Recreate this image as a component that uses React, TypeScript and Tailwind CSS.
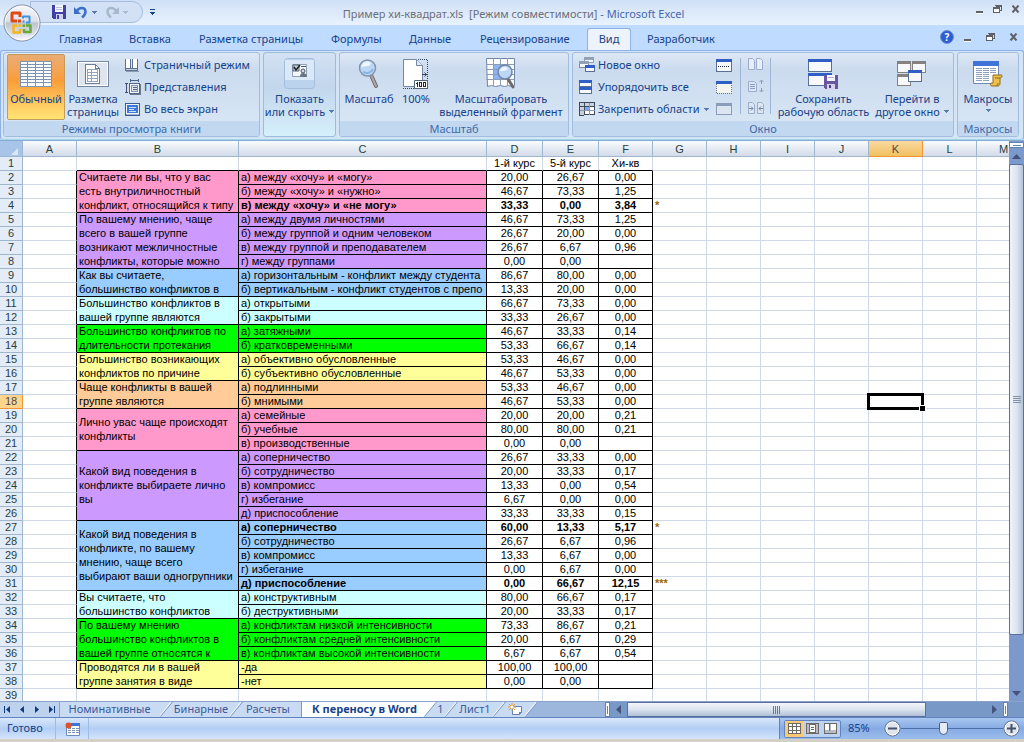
import React from "react";
import clsx from "clsx";

type Option = {
  text: string;
  d: string;
  e: string;
  f: string;
  bold?: boolean;
  mark?: string;
};

interface Question {
  fill: string;
  lines: string[];
  options: Option[];
}

const opt = (text: string, d: string, e: string, f: string): Option => ({ text, d, e, f });
const sig = (text: string, d: string, e: string, f: string, mark: string): Option => ({
  text,
  d,
  e,
  f,
  mark,
  bold: true,
});

const QUESTIONS: Question[] = [
  {
    fill: "bg-[#ff99cc]",
    lines: ["Считаете ли вы, что у вас", "есть внутриличностный", "конфликт, относящийся к типу"],
    options: [
      opt("а) между «хочу» и «могу»", "20,00", "26,67", "0,00"),
      opt("б) между «хочу» и «нужно»", "46,67", "73,33", "1,25"),
      sig("в) между «хочу» и «не могу»", "33,33", "0,00", "3,84", "*"),
    ],
  },
  {
    fill: "bg-[#cc99ff]",
    lines: ["По вашему мнению, чаще", "всего в вашей группе", "возникают межличностные", "конфликты, которые можно"],
    options: [
      opt("а) между двумя личностями", "46,67", "73,33", "1,25"),
      opt("б) между группой и одним человеком", "26,67", "20,00", "0,00"),
      opt("в) между группой и преподавателем", "26,67", "6,67", "0,96"),
      opt("г) между группами", "0,00", "0,00", ""),
    ],
  },
  {
    fill: "bg-[#99ccff]",
    lines: ["Как вы считаете,", "большинство конфликтов в"],
    options: [
      opt("а) горизонтальным - конфликт между студента", "86,67", "80,00", "0,00"),
      opt("б) вертикальным - конфликт студентов с препо", "13,33", "20,00", "0,00"),
    ],
  },
  {
    fill: "bg-[#ccffff]",
    lines: ["Большинство конфликтов в", "вашей группе являются"],
    options: [
      opt("а) открытыми", "66,67", "73,33", "0,00"),
      opt("б) закрытыми", "33,33", "26,67", "0,00"),
    ],
  },
  {
    fill: "bg-[#00ff00]",
    lines: ["Большинство конфликтов по", "длительности протекания"],
    options: [
      opt("а) затяжными", "46,67", "33,33", "0,14"),
      opt("б) кратковременными", "53,33", "66,67", "0,14"),
    ],
  },
  {
    fill: "bg-[#ffff99]",
    lines: ["Большинство возникающих", "конфликтов по причине"],
    options: [
      opt("а) объективно обусловленные", "53,33", "46,67", "0,00"),
      opt("б) субъективно обусловленные", "46,67", "53,33", "0,00"),
    ],
  },
  {
    fill: "bg-[#ffcc99]",
    lines: ["Чаще конфликты в вашей", "группе являются"],
    options: [
      opt("а) подлинными", "53,33", "46,67", "0,00"),
      opt("б) мнимыми", "46,67", "53,33", "0,00"),
    ],
  },
  {
    fill: "bg-[#ff99cc]",
    lines: ["Лично увас чаще происходят", "конфликты"],
    options: [
      opt("а) семейные", "20,00", "20,00", "0,21"),
      opt("б) учебные", "80,00", "80,00", "0,21"),
      opt("в) производственные", "0,00", "0,00", ""),
    ],
  },
  {
    fill: "bg-[#cc99ff]",
    lines: ["Какой вид поведения в", "конфликте выбираете лично", "вы"],
    options: [
      opt("а) соперничество", "26,67", "33,33", "0,00"),
      opt("б) сотрудничество", "20,00", "33,33", "0,17"),
      opt("в) компромисс", "13,33", "0,00", "0,54"),
      opt("г) избегание", "6,67", "0,00", "0,00"),
      opt("д) приспособление", "33,33", "33,33", "0,15"),
    ],
  },
  {
    fill: "bg-[#99ccff]",
    lines: ["Какой вид поведения в", "конфликте, по вашему", "мнению, чаще всего", "выбирают ваши одногрупники"],
    options: [
      sig("а) соперничество", "60,00", "13,33", "5,17", "*"),
      opt("б) сотрудничество", "26,67", "6,67", "0,96"),
      opt("в) компромисс", "13,33", "6,67", "0,00"),
      opt("г) избегание", "0,00", "6,67", "0,00"),
      sig("д) приспособление", "0,00", "66,67", "12,15", "***"),
    ],
  },
  {
    fill: "bg-[#ccffff]",
    lines: ["Вы считаете, что", "большинство конфликтов"],
    options: [
      opt("а) конструктивным", "80,00", "66,67", "0,17"),
      opt("б) деструктивными", "20,00", "33,33", "0,17"),
    ],
  },
  {
    fill: "bg-[#00ff00]",
    lines: ["По вашему мнению", "большинство конфликтов в", "вашей группе относятся к"],
    options: [
      opt("а) конфликтам низкой интенсивности", "73,33", "86,67", "0,21"),
      opt("б) конфликтам средней интенсивности", "20,00", "6,67", "0,29"),
      opt("в) конфликтам высокой интенсивности", "6,67", "6,67", "0,54"),
    ],
  },
  {
    fill: "bg-[#ffff99]",
    lines: ["Проводятся ли в вашей", "группе занятия в виде"],
    options: [opt("-да", "100,00", "100,00", ""), opt("-нет", "0,00", "0,00", "")],
  },
];

const COLUMNS = ["A", "B", "C", "D", "E", "F", "G", "H", "I", "J", "K", "L", "M"];
const TAIL = ["H", "I", "J", "K", "L", "M"];
const ACTIVE_COL = "K";
const ACTIVE_ROW = 18;

/* ---------- icons ---------- */

function OfficeLogo() {
  return (
    <svg width="40" height="40" viewBox="0 0 40 40">
      <defs>
        <linearGradient id="orb" x1="0" y1="0" x2="0" y2="1">
          <stop offset="0" stopColor="#f7f9fb" />
          <stop offset="0.45" stopColor="#dde1e8" />
          <stop offset="0.5" stopColor="#bfc5d0" />
          <stop offset="0.8" stopColor="#d9dee7" />
          <stop offset="1" stopColor="#ffffff" />
        </linearGradient>
      </defs>
      <circle cx="20" cy="20" r="18" fill="url(#orb)" stroke="#77859c" />
      <circle cx="20" cy="20" r="17" fill="none" stroke="#ffffff" strokeOpacity="0.8" />
      <g fill="none" strokeLinejoin="round">
        <path d="M18 14V10H10V18H15" stroke="#dd4a14" strokeWidth="3" />
        <path d="M21 15.500V13.500H27.500V19.500H24" stroke="#3e93dd" strokeWidth="2" />
        <path d="M15 22.500H11.500V29.500H18V26" stroke="#f5b51d" strokeWidth="2.500" />
        <path d="M24 22.500H28.500V29H22V26" stroke="#6aa837" strokeWidth="2.500" />
      </g>
      <path d="M16 16.500h3v3h-3z" fill="#dd4a14" />
      <path d="M20.500 17.500h2v2h-2z" fill="#3e93dd" />
      <path d="M16.500 21.500h2.500v2.500h-2.500z" fill="#f5b51d" />
      <path d="M20.500 21.500h2.500v2.500h-2.500z" fill="#6aa837" />
    </svg>
  );
}

function SaveIcon() {
  return (
    <svg width="14" height="14" viewBox="0 0 14 14" shapeRendering="crispEdges">
      <path d="M0 0h14v14H1L0 13z" fill="#4240a8" />
      <path d="M3 0h8v7H3z" fill="#f3f6fc" />
      <path d="M4 2h6v1H4zM4 4h6v1H4z" fill="#b5c0dc" />
      <path d="M4 9h7v5H4z" fill="#cfd3ea" />
      <path d="M5 10h2v4H5z" fill="#4240a8" />
    </svg>
  );
}

function UndoIcon({ muted }: { muted?: boolean }) {
  return (
    <svg width="14" height="14" viewBox="0 0 14 14" className={clsx(muted && "-scale-x-100")}>
      <path
        d="M3 6C5 2.500 11 1.500 11.500 6.500C11.500 9 10 11 8 12.500"
        fill="none"
        stroke={muted ? "#a9b8cc" : "#3c6fcb"}
        strokeWidth="2.500"
      />
      <path d="M0 2v7h7z" fill={muted ? "#a9b8cc" : "#3c6fcb"} />
    </svg>
  );
}

function Caret({ color = "#567db1" }: { color?: string }) {
  return (
    <svg width="5" height="3" viewBox="0 0 5 3" shapeRendering="crispEdges" className="inline-block shrink-0">
      <path d="M0 0h5v1H4v1H3v1H2V2H1V1H0z" fill={color} />
    </svg>
  );
}

function NormalViewIcon() {
  return (
    <svg width="32" height="26" viewBox="0 0 32 26" shapeRendering="crispEdges">
      <path d="M0 0h32v26H0z" fill="#7d94b0" />
      {[0, 1, 2, 3, 4, 5, 6, 7].map((r) =>
        [0, 1, 2, 3].map((c) => (
          <rect key={`${r}-${c}`} x={c * 8 + (c ? 0 : 1)} y={r * 3 + 1} width={c ? 7 : 6} height={r === 7 ? 3 : 2} fill="#ffffff" />
        ))
      )}
    </svg>
  );
}

function PageLayoutIcon() {
  return (
    <svg width="32" height="26" viewBox="0 0 32 26" shapeRendering="crispEdges">
      <path d="M0.500 0.500h31v25h-31z" fill="#ffffff" stroke="#76889f" />
      <path d="M2 2h28v22H2z" fill="#dfe5ee" />
      <path d="M8.500 3.500h10l4 4v15h-14z" fill="#ffffff" stroke="#6b7d97" />
      <path d="M18.500 3.500v4h4" fill="none" stroke="#6b7d97" />
      <path d="M10.500 8.500h10M10.500 11.500h10M10.500 14.500h10M10.500 17.500h10M10.500 20.500h10M10.500 8v13M14.500 8v13M20.500 8v13" stroke="#92a4bd" />
    </svg>
  );
}

function ShowHideIcon() {
  return (
    <svg width="32" height="32" viewBox="0 0 32 32">
      <rect x="0.500" y="0.500" width="30" height="30" rx="3" fill="#bcd3ee" stroke="#a3bddb" />
      <path d="M1 2h29v20H1z" fill="#dbe8f7" />
      <path d="M8.500 6.500h14v12h-14z" fill="#f3f6fb" stroke="#8fa0ba" />
      <path d="M9 7h6v6H9z" fill="#c5ced9" stroke="#5a6678" />
      <path d="M10 9l2 3 4-5" fill="none" stroke="#222222" strokeWidth="1.500" />
      <path d="M17 8.500h5" stroke="#4a5b77" />
      <path d="M16 19c0-3 1-4 3-4s4 1 4 4z" fill="#6b7482" />
      <circle cx="19" cy="13" r="2" fill="#d5dae2" stroke="#4f5865" />
    </svg>
  );
}

function BookIcon() {
  return (
    <svg width="14" height="13" viewBox="0 0 14 13" shapeRendering="crispEdges">
      <path d="M0 0h13v12H0z" fill="#5d7192" />
      <path d="M1 0h4v9H1z" fill="#ffffff" />
      <path d="M8 0h4v9H8z" fill="#ffffff" />
      <path d="M6 0h1v9H6z" fill="#dfe6f0" />
      <path d="M1 10h11v1H1z" fill="#c3cfdf" />
      <path d="M1 12h13v1H1z" fill="#8e9cb5" />
    </svg>
  );
}

function CustomViewsIcon() {
  return (
    <svg width="16" height="16" viewBox="0 0 16 16" shapeRendering="crispEdges">
      <path d="M0 4h3v1H2v8h1v1H0v-1h1V5H0z" fill="#3d4f6c" />
      <path d="M5 1h9v1H5zM5 0h1v3H5zM13 0h1v3h-1z" fill="#4c6488" />
      <path d="M4.500 4.500h10v10h-10z" fill="#ffffff" stroke="#4c6488" />
      <path d="M6.500 6.500h6v6h-6z" fill="#dfe7f3" stroke="#8094b4" />
      <path d="M8 8h4v1H8zM8 10h4v1H8z" fill="#4c6488" />
      <path d="M5 15h11v1H5zM15 5h1v11h-1z" fill="#6c7c96" />
    </svg>
  );
}

function FullScreenIcon() {
  return (
    <svg width="15" height="13" viewBox="0 0 15 13" shapeRendering="crispEdges">
      <path d="M0.500 0.500h14v12h-14z" fill="#eef3fa" stroke="#3d5c96" />
      <path d="M2 2h11v8H2z" fill="#3f78dd" />
      <path d="M4 4h7v1H4zM4 6h5v1H4zM4 8h7v1H4z" fill="#cfe0fb" />
      <path d="M1 11h13v1H1z" fill="#9fb2cf" />
    </svg>
  );
}

function Magnifier() {
  return (
    <svg width="22" height="32" viewBox="0 0 22 32">
      <path d="M13 17l5 11" stroke="#6f6a6c" strokeWidth="4" strokeLinecap="round" />
      <path d="M13 17l5 11" stroke="#aaa4a6" strokeWidth="2" strokeLinecap="round" />
      <circle cx="9.500" cy="10" r="8" fill="#bcd7f6" stroke="#8494ad" strokeWidth="1.500" />
      <path d="M3 9c1-5 6-7 10-4c-1 4-5 3-10 4z" fill="#f0f7ff" />
      <path d="M5 14c4 2 8 1 10-3" fill="none" stroke="#8bb2e6" strokeWidth="2" />
    </svg>
  );
}

function Zoom100Icon() {
  return (
    <svg width="28" height="32" viewBox="0 0 28 32">
      <path d="M1.500 1.500h13l6 6v21h-19z" fill="#ffffff" stroke="#7587a3" />
      <path d="M14.500 1.500v6h6" fill="#dfe8f4" stroke="#7587a3" />
      <path d="M16 1.500h9.500V31M1 30.500h25" fill="none" stroke="#2f4364" strokeDasharray="1 1" />
      <path d="M20 16.500h5M22.500 14.500l2 2-2 2" fill="none" stroke="#2f4364" />
      <path d="M12.500 22.500h13v8h-13z" fill="#ffffff" stroke="#56647a" />
      <path d="M15.500 24v5M14 25.500h1" stroke="#1d2736" fill="none" />
      <rect x="17.500" y="24.500" width="2" height="4" fill="none" stroke="#1d2736" />
      <rect x="21.500" y="24.500" width="2" height="4" fill="none" stroke="#1d2736" />
    </svg>
  );
}

function ZoomSelectionIcon() {
  return (
    <svg width="30" height="32" viewBox="0 0 30 32">
      <path d="M0.500 0.500h28v27l-3 1-3-1-4 1-4-1-5 1-4-1-4 1z" fill="#ffffff" stroke="#6f86a8" />
      <path d="M8 6h14v16H8z" fill="#8db3f3" />
      <path d="M0 6.500h28M0 11.500h28M0 16.500h28M0 21.500h28M7.500 0v28M14.500 0v28M21.500 0v28" stroke="#8b9cb8" />
      <path d="M22 21l5 8" stroke="#6f6a6c" strokeWidth="3" strokeLinecap="round" />
      <circle cx="19" cy="14" r="7" fill="#bcd7f6" stroke="#6f86a8" strokeWidth="1.500" />
      <path d="M14 13c1-4 5-5 8-3c-1 3-4 3-8 3z" fill="#f0f7ff" />
    </svg>
  );
}

/* blue title strip over a white body, the building block of the window icons */
function Pane({ x, y, w, h, bar = "#2f5fc4", edge = "#5a6f94" }: { x: number; y: number; w: number; h: number; bar?: string; edge?: string }) {
  return (
    <g>
      <rect x={x} y={y} width={w} height={h} fill={edge} />
      <rect x={x + 1} y={y + 1} width={w - 2} height={h - 2} fill="#f6f8fc" />
      <rect x={x} y={y} width={w} height={3} fill={bar} />
    </g>
  );
}

function NewWindowIcon() {
  return (
    <svg width="16" height="16" viewBox="0 0 16 16" shapeRendering="crispEdges">
      <Pane x={5} y={0} w={10} h={6} bar="#93a0b5" edge="#93a0b5" />
      <Pane x={0} y={4} w={10} h={7} bar="#93a0b5" edge="#7d8ba3" />
      <Pane x={6} y={8} w={10} h={7} />
    </svg>
  );
}

function ArrangeIcon() {
  return (
    <svg width="14" height="14" viewBox="0 0 14 14" shapeRendering="crispEdges">
      <Pane x={0} y={0} w={13} h={7} />
      <Pane x={0} y={7} w={13} h={7} />
    </svg>
  );
}

function FreezeIcon() {
  return (
    <svg width="16" height="15" viewBox="0 0 16 15" shapeRendering="crispEdges">
      <path d="M0.500 0.500h15v12h-15z" fill="#ffffff" stroke="#3c4a60" />
      <path d="M1 1h14v3H1zM1 1h4v12H1z" fill="#c9d0dc" />
      <path d="M1 4h15v1H1zM5 1h1v12H5z" fill="#3c4a60" />
      <path d="M10 1h1v12h-1zM1 8h15v1H1z" fill="#8b98ad" />
      <path d="M6 5h4v3H6z" fill="#7ea8ee" />
      <path d="M0 13h5v1H0z" fill="#3c4a60" />
    </svg>
  );
}

function SplitIcon() {
  return (
    <svg width="16" height="13" viewBox="0 0 16 13" shapeRendering="crispEdges">
      <Pane x={0} y={0} w={16} h={13} />
      <path d="M2 7h1v1H2zM4 7h1v1H4zM6 7h1v1H6zM8 7h1v1H8zM10 7h1v1h-1zM12 7h1v1h-1z" fill="#1d2736" />
    </svg>
  );
}

function HideIcon() {
  return (
    <svg width="16" height="13" viewBox="0 0 16 13" shapeRendering="crispEdges">
      <path d="M0 0h16v12H0z" fill="#f5f5ee" />
      <path d="M0 0h16v3H0z" fill="#2f5fc4" />
      <path d="M0.500 3v9.500h15V3" fill="none" stroke="#6a7487" strokeDasharray="1 1" />
    </svg>
  );
}

function UnhideIcon() {
  return (
    <svg width="16" height="12" viewBox="0 0 16 12" shapeRendering="crispEdges">
      <path d="M0 0h16v12H0z" fill="#8a9cb9" />
      <path d="M1 3h14v8H1z" fill="#dce6f3" />
    </svg>
  );
}

function SideBySideIcon() {
  return (
    <svg width="16" height="13" viewBox="0 0 16 13">
      <path d="M0.500 0.500h4l2 2v9h-6zM8.500 0.500h4l2 2v9h-6z" fill="#e6eef8" stroke="#9badca" />
    </svg>
  );
}

function SyncScrollIcon() {
  return (
    <svg width="16" height="14" viewBox="0 0 16 14">
      <path d="M0.500 2.500h6l2 2v8h-8z" fill="#dde7f4" stroke="#9badca" />
      <path d="M2 5.500h5M2 7.500h5M2 9.500h5M13.500 1v4M13.500 9v4M11.500 3l2-2 2 2M11.500 11l2 2 2-2" fill="none" stroke="#8b9ebf" />
    </svg>
  );
}

function ResetPositionIcon() {
  return (
    <svg width="16" height="13" viewBox="0 0 16 13">
      <path d="M0.500 0.500h4l2 2v9h-6zM9.500 0.500h4l2 2v9h-6z" fill="#dde7f4" stroke="#9badca" />
      <path d="M1 6.500h4M3 4.500l2 2-2 2M15 6.500h-4M13 4.500l-2 2 2 2" fill="none" stroke="#7388ab" />
    </svg>
  );
}

function SaveWorkspaceIcon() {
  return (
    <svg width="32" height="32" viewBox="0 0 32 32" shapeRendering="crispEdges">
      <Pane x={0} y={1} w={24} h={13} />
      <Pane x={0} y={15} w={24} h={13} />
      <path d="M16 17h14v14H17l-1-1z" fill="#6a55a4" />
      <path d="M19 17h8v6h-8z" fill="#f3f3fa" />
      <path d="M20 19h6v1h-6z" fill="#b2aed2" />
      <path d="M19 26h8v5h-8z" fill="#d5d2e8" />
      <path d="M21 27h2v3h-2z" fill="#4d3c85" />
    </svg>
  );
}

function SwitchWindowsIcon() {
  return (
    <svg width="30" height="30" viewBox="0 0 30 30" shapeRendering="crispEdges">
      <Pane x={0} y={2} w={14} h={12} bar="#85817f" edge="#85817f" />
      <Pane x={15} y={2} w={14} h={12} bar="#85817f" edge="#85817f" />
      <Pane x={0} y={15} w={14} h={12} bar="#85817f" edge="#85817f" />
      <Pane x={11} y={11} w={14} h={12} />
    </svg>
  );
}

function MacrosIcon() {
  return (
    <svg width="30" height="26" viewBox="0 0 30 26">
      <path d="M0.500 0.500h25v22h-25z" fill="#ffffff" stroke="#7088b3" />
      <path d="M0 0h26v5H0z" fill="#3f73d8" />
      <path d="M3 7.500h6M3 9.500h6M3 11.500h6M3 13.500h6M3 15.500h6M3 17.500h6M3 19.500h6M10 7.500h6M10 9.500h6M10 11.500h6M10 13.500h6M10 15.500h6M10 17.500h6M10 19.500h6M17 7.500h6M17 9.500h6M17 11.500h6" stroke="#8ea1c0" />
      <path d="M20 14h8c2 0 1 3-1 3v5c0 2-1 3-2 3h-6c-2 0-2-3 0-3h1z" fill="#efc04a" stroke="#8f6a1c" />
      <path d="M22 17h5M25 22c0 2-1 3-2 2" fill="none" stroke="#8f6a1c" />
    </svg>
  );
}

function MinimizeGlyph() {
  return (
    <svg width="8" height="10" viewBox="0 0 8 10" shapeRendering="crispEdges">
      <path d="M0 7h7v2H0z" fill="#5d6168" />
      <path d="M0 9h7v1H0z" fill="#ffffff" />
    </svg>
  );
}

function RestoreGlyph() {
  return (
    <svg width="9" height="8" viewBox="0 0 9 8" shapeRendering="crispEdges">
      <path d="M2 0h7v6H7V5h1V2H3V1H2z" fill="#5d6168" />
      <path d="M0 2h7v6H0z" fill="#5d6168" />
      <path d="M1 4h5v3H1z" fill="#ffffff" />
    </svg>
  );
}

function CloseGlyph() {
  return (
    <svg width="9" height="8" viewBox="0 0 9 8">
      <path d="M1.500 0.500l6 7M7.500 0.500l-6 7" stroke="#5d6168" strokeWidth="2" />
    </svg>
  );
}

function MacroRecordIcon() {
  return (
    <svg width="15" height="14" viewBox="0 0 15 14">
      <path d="M1.500 1.500h13v12h-13z" fill="#ffffff" stroke="#6f8bbb" />
      <path d="M2 1h13v3H2z" fill="#3f73d8" />
      <path d="M3 6.500h3M7 6.500h3M11 6.500h3M3 8.500h3M7 8.500h3M11 8.500h3M3 10.500h3M7 10.500h3M11 10.500h3" stroke="#7d92b5" />
      <circle cx="3.500" cy="3.500" r="3" fill="#e0502a" />
    </svg>
  );
}

function NewSheetIcon() {
  return (
    <svg width="15" height="13" viewBox="0 0 15 13">
      <path d="M4.500 3.500h9v6l-2 2h-7z" fill="#ffffff" stroke="#6280b0" />
      <path d="M11 12l3-3h-3z" fill="#6280b0" />
      <path d="M4 0v8M0 4h8M1 1l6 6M7 1l-6 6" stroke="#e69a2a" />
      <circle cx="4" cy="4" r="1.500" fill="#ffffff" />
    </svg>
  );
}

/* ---------- window chrome ---------- */

function WindowButtons({ className }: { className: string }) {
  return (
    <div className={clsx("flex items-center", className)}>
      <button aria-label="Свернуть"><MinimizeGlyph /></button>
      <button aria-label="Восстановить"><RestoreGlyph /></button>
      <button aria-label="Закрыть"><CloseGlyph /></button>
    </div>
  );
}

function TitleBar() {
  return (
    <header className="flex h-6 shrink-0 bg-linear-to-b from-[#cfe0f6] via-[#dce9fa] to-[#e6f2fe]">
      <div className="flex w-[163px] shrink-0 items-start pt-px pl-[30px]">
        <div className="flex h-[22px] w-[113px] items-center rounded-r-full border border-[#a5bede] bg-[#d2e1f5] pl-[21px]">
          <button aria-label="Сохранить"><SaveIcon /></button>
          <button aria-label="Отменить" className="ml-2 flex items-center gap-1"><UndoIcon /><Caret /></button>
          <button aria-label="Вернуть" className="ml-2 flex items-center gap-1"><UndoIcon muted /><Caret color="#a9b8cc" /></button>
        </div>
        <button aria-label="Настройка панели" className="mt-2 ml-[7px] flex flex-col items-center gap-[2px]">
          <span className="h-px w-[5px] bg-[#15428b]" />
          <Caret color="#15428b" />
        </button>
      </div>
      <h1 className="flex-1 pt-1 text-center text-[11px] leading-5 whitespace-pre text-[#6c7079]">
        {"Пример хи-квадрат.xls  [Режим совместимости]"}
        <span className="text-[#4567ad]"> - Microsoft Excel</span>
      </h1>
      <WindowButtons className="mt-[3px] h-3 w-[160px] justify-end gap-[9px] pr-1" />
    </header>
  );
}

function RibbonTabs() {
  const tab = "flex h-[22px] items-center";
  return (
    <nav className="flex h-[26px] shrink-0 items-end border-t border-[#e9f3ff] bg-[#bfdbff] pl-[59px] text-[11px] text-[#15428b]">
      <button className={clsx(tab, "w-[70px]")}>Главная</button>
      <button className={clsx(tab, "w-[70px]")}>Вставка</button>
      <button className={clsx(tab, "w-[132px]")}>Разметка страницы</button>
      <button className={clsx(tab, "w-[78px]")}>Формулы</button>
      <button className={clsx(tab, "w-[71px]")}>Данные</button>
      <button className={clsx(tab, "w-[107px]")}>Рецензирование</button>
      <button className={clsx(tab, "w-[44px] justify-center rounded-t-[3px] border border-b-0 border-[#8db2e3] bg-[#edf3fb]")}>Вид</button>
      <button className={clsx(tab, "ml-4")}>Разработчик</button>
      <div className="flex h-[22px] flex-1 items-center justify-end pr-[6px] pb-1">
        <button aria-label="Справка" className="flex size-[14px] items-center justify-center rounded-full border border-[#6f93cb] bg-[#2c5ed2] text-[10px] leading-3 font-bold text-white">
          ?
        </button>
        <WindowButtons className="ml-[10px] gap-[14px]" />
      </div>
    </nav>
  );
}

function Group({ label, className, children }: { label: string; className: string; children: React.ReactNode }) {
  return (
    <section
      aria-label={label}
      className={clsx(
        "flex flex-col overflow-hidden rounded-[3px] border border-[#a1bcdd] bg-linear-to-b from-[#dde8f5] via-[#cbdbee] via-20% to-[#dae8f6]",
        className
      )}
    >
      <div className="flex flex-1 items-start pt-px">{children}</div>
      <div className="h-[15px] bg-[#c2d8f0] text-center text-[11px] leading-[15px] text-[#3e6aaa]">{label}</div>
    </section>
  );
}

interface BigButtonProps {
  icon: React.ReactNode;
  className: string;
  lines: string[];
  menu?: boolean;
  active?: boolean;
}

function BigButton({ icon, className, lines, menu, active }: BigButtonProps) {
  return (
    <button
      className={clsx(
        "flex h-[66px] shrink-0 flex-col items-center rounded-[2px] border text-[11px] leading-[13px] whitespace-nowrap",
        active
          ? "border-[#c39b5c] bg-linear-to-b from-[#e9ac73] via-[#fb9d38] via-40% to-[#ffe575]"
          : "border-transparent",
        className
      )}
    >
      <span className="flex h-[37px] items-center justify-center">{icon}</span>
      {lines.map((line, i) => (
        <span key={line} className="flex items-center gap-1">
          {line}
          {menu && i === lines.length - 1 && lines.length > 1 && <Caret />}
        </span>
      ))}
      {menu && lines.length === 1 && <span className="flex h-[10px] items-center"><Caret /></span>}
    </button>
  );
}

function SmallButton({ icon, label, menu }: { icon: React.ReactNode; label: string; menu?: boolean }) {
  return (
    <button className="flex h-[22px] items-center text-[11px] whitespace-nowrap">
      <span className="flex w-[19px] shrink-0 justify-start">{icon}</span>
      {label}
      {menu && <span className="ml-1 flex"><Caret /></span>}
    </button>
  );
}

function Ribbon() {
  return (
    <div className="flex h-[90px] shrink-0 gap-[3px] rounded-[3px] border border-[#8db2e3] border-b-[#9fd9e8] bg-[#d3e4f6] pt-px pr-1 pb-[2px] pl-[2px] text-[#15428b]">
      <Group label="Режимы просмотра книги" className="w-[257px]">
        <BigButton active icon={<NormalViewIcon />} className="ml-[3px] w-[58px]" lines={["Обычный"]} />
        <BigButton icon={<PageLayoutIcon />} className="w-[56px]" lines={["Разметка", "страницы"]} />
        <div className="ml-1 flex flex-col">
          <SmallButton icon={<BookIcon />} label="Страничный режим" />
          <SmallButton icon={<CustomViewsIcon />} label="Представления" />
          <SmallButton icon={<FullScreenIcon />} label="Во весь экран" />
        </div>
      </Group>

      <section className="flex w-[73px] justify-center rounded-[3px] border border-[#9bbcdd] bg-linear-to-b from-[#d3e2f3] via-[#c3d6ec] via-40% to-[#d5effb] pt-px">
        <BigButton menu icon={<ShowHideIcon />} className="w-[71px]" lines={["Показать", "или скрыть"]} />
      </section>

      <Group label="Масштаб" className="w-[230px]">
        <BigButton icon={<Magnifier />} className="ml-[2px] w-[54px]" lines={["Масштаб"]} />
        <BigButton icon={<Zoom100Icon />} className="w-[40px]" lines={["100%"]} />
        <BigButton icon={<ZoomSelectionIcon />} className="w-[130px]" lines={["Масштабировать", "выделенный фрагмент"]} />
      </Group>

      <Group label="Окно" className="flex-1">
        <div className="ml-[6px] flex w-[137px] flex-col">
          <SmallButton icon={<NewWindowIcon />} label="Новое окно" />
          <SmallButton icon={<ArrangeIcon />} label="Упорядочить все" />
          <SmallButton menu icon={<FreezeIcon />} label="Закрепить области" />
        </div>
        <div className="flex w-6 flex-col">
          <button aria-label="Разделить" className="flex h-[22px] items-center"><SplitIcon /></button>
          <button aria-label="Скрыть" className="flex h-[22px] items-center"><HideIcon /></button>
          <button aria-label="Отобразить" className="flex h-[22px] items-center"><UnhideIcon /></button>
        </div>
        <div className="mt-1 flex h-[56px] w-[31px] items-center justify-center border-x border-[#9db5d6]">
          <div className="flex flex-col">
            <button aria-label="Рядом" className="flex h-[22px] items-center"><SideBySideIcon /></button>
            <button aria-label="Синхронная прокрутка" className="flex h-[22px] items-center"><SyncScrollIcon /></button>
            <button aria-label="Восстановить расположение" className="flex h-[22px] items-center"><ResetPositionIcon /></button>
          </div>
        </div>
        <BigButton icon={<SaveWorkspaceIcon />} className="ml-1 w-[97px]" lines={["Сохранить", "рабочую область"]} />
        <BigButton menu icon={<SwitchWindowsIcon />} className="w-[80px]" lines={["Перейти в", "другое окно"]} />
      </Group>

      <Group label="Макросы" className="w-[62px]">
        <BigButton menu icon={<MacrosIcon />} className="w-[60px]" lines={["Макросы"]} />
      </Group>
    </div>
  );
}

/* ---------- worksheet ---------- */

const gridCell = "h-[14px] border-r border-b border-[#d0d7e5] p-0";
const boxCell = "h-[14px] border-r border-b border-black p-0";

function RowHeader({ row }: { row: number }) {
  return (
    <th
      scope="row"
      className={clsx(
        "h-[14px] border-r border-b p-0 text-center font-normal",
        row === ACTIVE_ROW ? "border-[#f29536] bg-[#ffd58d] text-[#4a4a4a]" : "border-[#9eb6ce] bg-[#e4ecf7] text-[#27413e]"
      )}
    >
      {row}
    </th>
  );
}

function TailCells({ row }: { row: number }) {
  return (
    <>
      {TAIL.map((col) =>
        col === ACTIVE_COL && row === ACTIVE_ROW ? (
          <td key={col} className={clsx(gridCell, "relative")}>
            <span className="absolute -inset-[2px] border-[3px] border-black" />
            <span className="absolute -right-[3px] -bottom-[3px] size-[5px] bg-black outline outline-white" />
          </td>
        ) : (
          <td key={col} className={gridCell} />
        )
      )}
    </>
  );
}

function Worksheet() {
  let row = 1;
  return (
    <div className="min-w-0 flex-1 overflow-hidden bg-white">
      <table className="w-[1031px] table-fixed border-separate border-spacing-0 font-['Liberation_Sans',Arial,sans-serif] text-[11px] leading-[13px] whitespace-nowrap text-black">
        <colgroup>
          <col className="w-[23px]" />
          <col className="w-[54px]" />
          <col className="w-[162px]" />
          <col className="w-[248px]" />
          <col className="w-[56px]" />
          <col className="w-[56px]" />
          {COLUMNS.slice(5).map((c) => (
            <col key={c} className="w-[54px]" />
          ))}
        </colgroup>
        <thead>
          <tr>
            <th className="h-4 border-r border-b border-[#9eb6ce] bg-[#a9c4e9] p-0">
              <svg width="20" height="13" viewBox="0 0 20 13">
                <path d="M18 6v7H11z" fill="#dbe7f7" />
              </svg>
            </th>
            {COLUMNS.map((col) => (
              <th
                key={col}
                scope="col"
                className={clsx(
                  "h-4 border-r border-b bg-linear-to-b p-0 pt-px font-normal",
                  col === ACTIVE_COL
                    ? "border-[#f29536] from-[#f9d99f] to-[#f1c15f] text-[#4a4a4a]"
                    : "border-[#9eb6ce] from-[#f9fcfd] to-[#d3dbe9] text-[#27413e]"
                )}
              >
                {col}
              </th>
            ))}
          </tr>
        </thead>
        <tbody>
          <tr>
            <RowHeader row={1} />
            <td className={gridCell} />
            <td className="h-[14px] border-r border-b border-r-[#d0d7e5] border-b-black p-0" />
            <td className="h-[14px] border-r border-b border-r-[#d0d7e5] border-b-black p-0" />
            {["1-й курс", "5-й курс", "Хи-кв"].map((title) => (
              <td key={title} className="h-[14px] border-r border-b border-r-[#d0d7e5] border-b-black p-0 text-center">
                {title}
              </td>
            ))}
            <td className={gridCell} />
            <TailCells row={1} />
          </tr>
          {QUESTIONS.map((q) =>
            q.options.map((o, i) => {
              row += 1;
              return (
                <tr key={row}>
                  <RowHeader row={row} />
                  <td className="h-[14px] border-r border-b border-r-black border-b-[#d0d7e5] p-0" />
                  {i === 0 && (
                    <td rowSpan={q.options.length} className={clsx("border-r border-b border-black p-0 pl-[2px] align-middle", q.fill)}>
                      <div className="-mt-px">
                        {q.lines.map((line) => (
                          <div key={line} className="leading-[14px]">{line}</div>
                        ))}
                      </div>
                    </td>
                  )}
                  <td className={clsx(boxCell, "overflow-hidden pb-px pl-[2px] leading-3", q.fill, o.bold && "font-bold")}>{o.text}</td>
                  {[o.d, o.e, o.f].map((value, k) => (
                    <td key={k} className={clsx(boxCell, "text-center", o.bold && "font-bold")}>{value}</td>
                  ))}
                  <td className={clsx(gridCell, "pl-[2px] font-bold text-[#996600]")}>{o.mark}</td>
                  <TailCells row={row} />
                </tr>
              );
            })
          )}
          <tr>
            <RowHeader row={39} />
            {COLUMNS.map((col) => (
              <td key={col} className={gridCell} />
            ))}
          </tr>
        </tbody>
      </table>
    </div>
  );
}

function VerticalScroll() {
  return (
    <div className="flex w-[15px] shrink-0 flex-col items-stretch bg-[#7b9acb]">
      <div className="mt-px flex h-[6px] items-center justify-center border border-[#5f84b8] bg-white">
        <span className="h-px w-2 bg-[#5f84b8]" />
      </div>
      <button aria-label="Вверх" className="flex h-4 items-center justify-center">
        <svg width="9" height="5" viewBox="0 0 9 5"><path d="M0 5h9L4.500 0z" fill="#44527c" /></svg>
      </button>
      <div className="flex flex-[470] flex-col items-center justify-center gap-px rounded-[2px] border border-[#5a6f9e] bg-linear-to-r from-[#f0f4fa] via-[#dde5f0] to-[#b4c3d8]">
        <span className="h-px w-2 bg-[#8492a8]" />
        <span className="h-px w-2 bg-[#8492a8]" />
        <span className="h-px w-2 bg-[#8492a8]" />
        <span className="h-px w-2 bg-[#8492a8]" />
      </div>
      <div className="flex-[50]" />
      <button aria-label="Вниз" className="flex h-4 items-center justify-center">
        <svg width="9" height="5" viewBox="0 0 9 5"><path d="M0 0h9L4.500 5z" fill="#44527c" /></svg>
      </button>
    </div>
  );
}

/* ---------- bottom bars ---------- */

function Slant({ left, right }: { left: string; right: string }) {
  return (
    <svg width="14" height="15" viewBox="0 0 14 15" className="shrink-0">
      <path d="M0 0h14L1 15H0z" fill={left} />
      <path d="M14 0L1 15h13z" fill={right} />
      <path d="M12 0L1 14" stroke="#ffffff" />
      <path d="M13.500 0L1.500 14.500" stroke="#7d99c4" fill="none" />
    </svg>
  );
}

const NAV = [
  { label: "Первый лист", d: "M1 0h1v7H1zM7 0v7L3 3.500z" },
  { label: "Предыдущий лист", d: "M6 0v7L2 3.500z" },
  { label: "Следующий лист", d: "M2 0v7l4-3.500z" },
  { label: "Последний лист", d: "M6 0h1v7H6zM1 0v7l4-3.500z" },
];

function SheetBar() {
  const tab = "flex h-[15px] shrink-0 items-center justify-center bg-[#c9dbf3]";
  return (
    <div className="flex h-4 shrink-0 border-t border-[#8ba3cb] bg-[#9db7dc] text-[11px] text-[#3b5a9a]">
      <div className="flex w-[60px] shrink-0 items-center justify-around border-r border-[#8ba3cb] bg-[#bdd2ee]">
        {NAV.map((n) => (
          <button key={n.label} aria-label={n.label}>
            <svg width="8" height="7" viewBox="0 0 8 7"><path d={n.d} fill="#12397e" /></svg>
          </button>
        ))}
      </div>
      <button className={clsx(tab, "w-[99px]")}>Номинативные</button>
      <Slant left="#c9dbf3" right="#c9dbf3" />
      <button className={clsx(tab, "w-[56px]")}>Бинарные</button>
      <Slant left="#c9dbf3" right="#c9dbf3" />
      <button className={clsx(tab, "w-[59px] border-r border-[#7d99c4] pr-2")}>Расчеты</button>
      <button className="flex h-[15px] w-[121px] shrink-0 items-center justify-center bg-white pl-1 font-bold text-[#15428b]">К переносу в Word</button>
      <Slant left="#ffffff" right="#c9dbf3" />
      <button className={clsx(tab, "w-[7px]")}>1</button>
      <Slant left="#c9dbf3" right="#c9dbf3" />
      <button className={clsx(tab, "w-[34px]")}>Лист1</button>
      <Slant left="#c9dbf3" right="#c9dbf3" />
      <button aria-label="Новый лист" className={clsx(tab, "w-[18px]")}><NewSheetIcon /></button>
      <Slant left="#c9dbf3" right="#9db7dc" />
      <div className="flex-[67]" />
      <div className="flex flex-[418] bg-[#7898c8]">
        <div className="flex w-[5px] items-center justify-center border border-[#5f84b8] bg-white"><span className="h-2 w-px bg-[#5f84b8]" /></div>
        <button aria-label="Влево" className="flex w-[17px] items-center justify-center">
          <svg width="5" height="9" viewBox="0 0 5 9"><path d="M5 0v9L0 4.500z" fill="#44527c" /></svg>
        </button>
        <div className="flex flex-[299] items-center justify-center gap-px border border-[#5a6f9e] bg-linear-to-b from-[#f4f7fb] via-[#dbe3ee] to-[#aebfd6]">
          <span className="h-2 w-px bg-[#6b7b94]" />
          <span className="h-2 w-px bg-[#6b7b94]" />
          <span className="h-2 w-px bg-[#6b7b94]" />
          <span className="h-2 w-px bg-[#6b7b94]" />
        </div>
        <div className="flex-[60]" />
        <button aria-label="Вправо" className="flex w-[17px] items-center justify-center">
          <svg width="5" height="9" viewBox="0 0 5 9"><path d="M0 0v9l5-4.500z" fill="#44527c" /></svg>
        </button>
        <div className="flex w-[5px] items-center justify-center border border-[#5f84b8] bg-white"><span className="h-2 w-px bg-[#5f84b8]" /></div>
        <div className="w-4" />
      </div>
    </div>
  );
}

function RoundButton({ label, plus }: { label: string; plus?: boolean }) {
  return (
    <button aria-label={label} className="shrink-0">
      <svg width="17" height="17" viewBox="0 0 17 17">
        <circle cx="8.500" cy="8.500" r="7.500" fill="#dfe5ef" stroke="#5b6a86" />
        <circle cx="8.500" cy="8.500" r="6.500" fill="none" stroke="#ffffff" />
        <path d={plus ? "M4 7.500h3.500V4h2v3.500H13v2H9.500V13h-2V9.500H4z" : "M4 7.500h9v2H4z"} fill="#45516a" />
      </svg>
    </button>
  );
}

function StatusBar() {
  return (
    <footer className="flex h-[22px] shrink-0 border-t border-[#5f83bd] bg-linear-to-b from-[#d9e8fb] via-[#b3cef4] to-[#d3e5fc] text-[11px] text-[#15428b]">
      <div className="flex w-[56px] items-center border-r border-[#9dbbe6] pl-[7px]">Готово</div>
      <button aria-label="Запись макроса" className="flex w-[33px] items-center justify-center border-r border-[#9dbbe6]"><MacroRecordIcon /></button>
      <div className="flex-1" />
      <div className="flex w-[245px] items-center border-l border-[#5f83bd] bg-linear-to-b from-[#a9c7f2] via-[#86abe3] to-[#9bbdee] pl-1">
        <div className="flex h-[18px] w-[57px] rounded-[2px] border border-[#5f83bd] bg-[#bcd3f3]">
          <button aria-label="Обычный" className="flex flex-1 items-center justify-center bg-[#fbc976]">
            <svg width="13" height="11" viewBox="0 0 13 11" shapeRendering="crispEdges">
              <path d="M0 0h13v11H0z" fill="#6d6a66" />
              <path d="M1 1h3v2H1zM5 1h3v2H5zM9 1h3v2H9zM1 4h3v3H1zM5 4h3v3H5zM9 4h3v3H9zM1 8h3v2H1zM5 8h3v2H5zM9 8h3v2H9z" fill="#ffffff" />
            </svg>
          </button>
          <button aria-label="Разметка страницы" className="flex flex-1 items-center justify-center">
            <svg width="13" height="11" viewBox="0 0 13 11" shapeRendering="crispEdges">
              <path d="M0.500 0.500h12v10h-12z" fill="#b6bcc6" stroke="#6d6a66" />
              <path d="M3.500 1.500h6v8h-6z" fill="#ffffff" stroke="#6d6a66" />
              <path d="M5 4h3v1H5zM5 6h3v1H5z" fill="#6d6a66" />
            </svg>
          </button>
          <button aria-label="Страничный режим" className="flex flex-1 items-center justify-center">
            <svg width="13" height="11" viewBox="0 0 13 11" shapeRendering="crispEdges">
              <path d="M0.500 0.500h12v10h-12z" fill="#b6bcc6" stroke="#6d6a66" />
              <path d="M1 1h4v6H1zM7 1h5v6H7z" fill="#ffffff" />
              <path d="M5 0h1v8H5z" fill="#6d6a66" />
            </svg>
          </button>
        </div>
        <span className="w-[43px] pl-[7px]">85%</span>
        <RoundButton label="Уменьшить" />
        <div className="relative flex flex-1 items-center">
          <span className="h-px w-full bg-[#4e6ea6]" />
          <input
            type="range"
            aria-label="Масштаб"
            min={0}
            max={100}
            defaultValue={41}
            className="absolute inset-0 w-full appearance-none bg-transparent [&::-webkit-slider-thumb]:h-[13px] [&::-webkit-slider-thumb]:w-[9px] [&::-webkit-slider-thumb]:appearance-none [&::-webkit-slider-thumb]:rounded-t-[2px] [&::-webkit-slider-thumb]:rounded-b-[5px] [&::-webkit-slider-thumb]:border [&::-webkit-slider-thumb]:border-[#4b5f86] [&::-webkit-slider-thumb]:bg-[#e2eaf6]"
          />
        </div>
        <RoundButton label="Увеличить" plus />
        <div className="w-1" />
      </div>
    </footer>
  );
}

export default function App() {
  return (
    <div className="relative flex h-screen flex-col overflow-hidden bg-[#bfdbff] font-['Noto_Sans',Tahoma,sans-serif]">
      <TitleBar />
      <RibbonTabs />
      <button aria-label="Кнопка Office" className="absolute top-[3px] left-[2px]">
        <OfficeLogo />
      </button>
      <Ribbon />
      <div className="h-px shrink-0 bg-[#8aa9d6]" />
      <main className="flex min-h-0 flex-1">
        <Worksheet />
        <VerticalScroll />
      </main>
      <SheetBar />
      <StatusBar />
      <div className="h-[3px] shrink-0 bg-[#d4d0c8]" />
    </div>
  );
}
